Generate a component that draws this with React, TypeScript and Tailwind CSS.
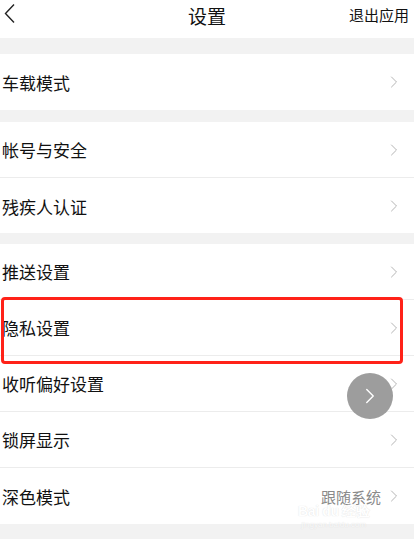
import { ChevronRight } from 'lucide-react';

const font = { fontFamily: '"Noto Sans CJK SC", "Noto Sans", sans-serif' };

function Row({ label, value, last }: { label: string; value?: string; last?: boolean }) {
    return (
        <div className={`flex h-[56px] items-center justify-between bg-white pl-[2px] pr-[10px] ${last ? '' : 'border-b border-[#ececec]'}`}>
            <span className="text-[17px] leading-none text-[#111]">{label}</span>
            <div className="flex items-center gap-[3px]">
                {value && <span className="text-[15px] leading-none text-[#8a8a8a]">{value}</span>}
                <ChevronRight className="h-[20px] w-[20px] text-[#b5b5b5]" strokeWidth={1.2} />
            </div>
        </div>
    );
}

function Gap({ h }: { h: string }) {
    return <div className={`${h} bg-[#f2f2f2]`} />;
}

export default function App() {
    return (
        <div className="relative h-[539px] w-[414px] overflow-hidden bg-[#f2f2f2]" style={font}>
            <header className="relative flex h-[38px] items-center justify-center bg-white pb-[6px]">
                <svg className="absolute left-[3px] top-[3px] h-[21px] w-[13px]" viewBox="0 0 13 21" fill="none">
                    <path d="M11 1.5 L2.5 10.5 L11 19.5" stroke="#222" strokeWidth="1.4" />
                </svg>
                <h1 className="text-[19px] font-normal text-[#111]">设置</h1>
                <span className="absolute right-[5px] top-[4px] text-[15px] text-[#111]">退出应用</span>
            </header>

            <Gap h="h-[16px]" />
            <Row label="车载模式" last />
            <Gap h="h-[12px]" />
            <Row label="帐号与安全" />
            <div className="h-[55px]">
                <Row label="残疾人认证" last />
            </div>
            <Gap h="h-[11px]" />
            <Row label="推送设置" />
            <Row label="隐私设置" />
            <Row label="收听偏好设置" />
            <Row label="锁屏显示" />
            <Row label="深色模式" value="跟随系统" last />

            {/* red highlight */}
            <div className="absolute left-[1px] top-[297px] h-[67px] w-[402px] rounded-[4px] border-[3px] border-[#ff2218]" />

            {/* floating button */}
            <div className="absolute left-[347px] top-[373px] flex h-[46px] w-[46px] items-center justify-center rounded-full bg-[#9d9d9d]">
                <ChevronRight className="h-[26px] w-[26px] text-white" strokeWidth={1.3} />
            </div>

            {/* watermark */}
            <div className="pointer-events-none absolute left-[298px] top-[504px] flex flex-col items-center leading-none text-white opacity-70" style={{ textShadow: '0 0 1px #c8c8c8' }}>
                <span className="text-[14px] font-bold tracking-tight" style={{ fontFamily: '"Liberation Sans", sans-serif' }}>Bai du 经验</span>
                <span className="mt-[3px] text-[8px]" style={{ fontFamily: '"Liberation Sans", sans-serif' }}>jingyan.baidu.com</span>
            </div>
        </div>
    );
}
